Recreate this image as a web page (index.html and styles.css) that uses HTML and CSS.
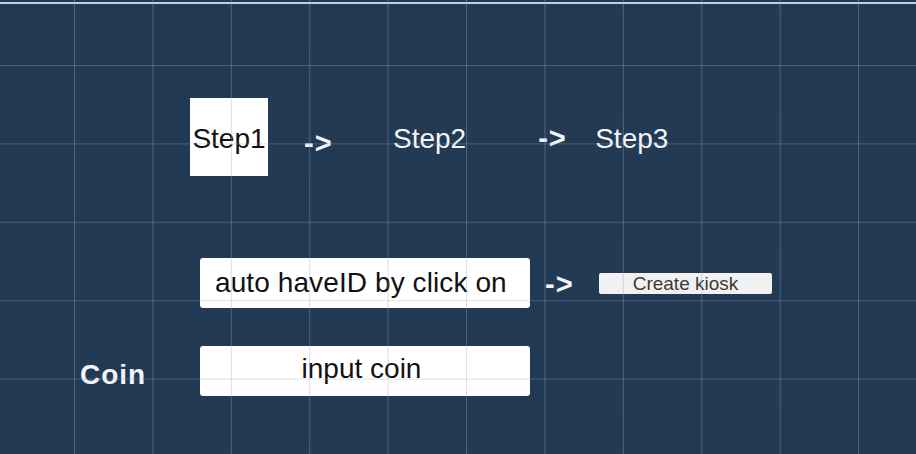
FILE: index.html
```html
<!DOCTYPE html>
<html>
<head>
<meta charset="utf-8">
<link rel="stylesheet" href="styles.css">
</head>
<body>
<div class="frame">
  <div class="steps">
    <div class="step step-active">Step1</div>
    <div class="arrow arrow-a">-&gt;</div>
    <div class="step step-2">Step2</div>
    <div class="arrow arrow-b">-&gt;</div>
    <div class="step step-3">Step3</div>
  </div>
  <div class="row row-id">
    <div class="label"></div>
    <div class="field field-left">auto haveID by click on</div>
    <div class="arrow arrow-c">-&gt;</div>
    <div class="btn">Create kiosk</div>
  </div>
  <div class="row row-coin">
    <div class="label">Coin</div>
    <div class="field field-center">input coin</div>
  </div>
</div>
<div class="grid"></div>
</body>
</html>
```
FILE: styles.css
```css
html, body {
  margin: 0;
  padding: 0;
}
body {
  width: 916px;
  height: 454px;
  overflow: hidden;
  background: #233a54;
  font-family: "Liberation Sans", Arial, sans-serif;
  position: relative;
  padding-top: 2px;
  box-sizing: border-box;
}
.frame {
  border-top: 2px solid #bcd0e6;
  padding-top: 94px;
}
.steps {
  display: flex;
  align-items: center;
  height: 78px;
  padding-left: 190px;
}
.step {
  font-size: 28px;
  color: #f2f4f7;
  line-height: 1;
  padding-top: 4px;
}
.step-active {
  width: 78px;
  height: 78px;
  box-sizing: border-box;
  background: #ffffff;
  color: #111;
  display: flex;
  align-items: center;
  justify-content: center;
}
.arrow {
  font-size: 29px;
  font-weight: bold;
  color: #f2f4f7;
  line-height: 1;
  width: 29px;
  letter-spacing: 1px;
}
.arrow-a { margin-left: 36px; margin-top: 12px; }
.step-2 { margin-left: 60px; }
.arrow-b { margin-left: 72px; margin-top: 2px; }
.step-3 { margin-left: 28px; }

.row {
  display: flex;
  align-items: center;
  height: 50px;
  padding-left: 80px;
}
.row-id { margin-top: 82px; }
.row-coin { margin-top: 38px; }
.label {
  width: 120px;
  font-size: 28px;
  font-weight: bold;
  letter-spacing: 1px;
  color: #f2f4f7;
  line-height: 1;
  margin-top: 8px;
}
.field {
  width: 330px;
  height: 50px;
  background: #ffffff;
  border-radius: 3px;
  font-size: 28px;
  color: #111;
  display: flex;
  align-items: center;
  box-sizing: border-box;
}
.field-left { padding-left: 15px; letter-spacing: 0.1px; }
.field-center { justify-content: center; padding-right: 7px; padding-bottom: 4px; }
.arrow-c { margin-left: 15px; margin-top: 2px; }
.btn {
  margin-left: 25px;
  width: 173px;
  height: 21px;
  background: #f1f1f1;
  border-radius: 2px;
  font-size: 19px;
  color: #3a3a3a;
  display: flex;
  align-items: center;
  justify-content: center;
  line-height: 1;
}
.grid {
  position: absolute;
  left: 0;
  top: 0;
  width: 916px;
  height: 454px;
  pointer-events: none;
  background-image:
    linear-gradient(to right, rgba(150, 170, 195, 0.38) 1px, transparent 1px),
    linear-gradient(to bottom, rgba(150, 170, 195, 0.32) 1px, transparent 1px);
  background-size: 78.42px 78.42px;
  background-position: 74px 65px;
}
```
